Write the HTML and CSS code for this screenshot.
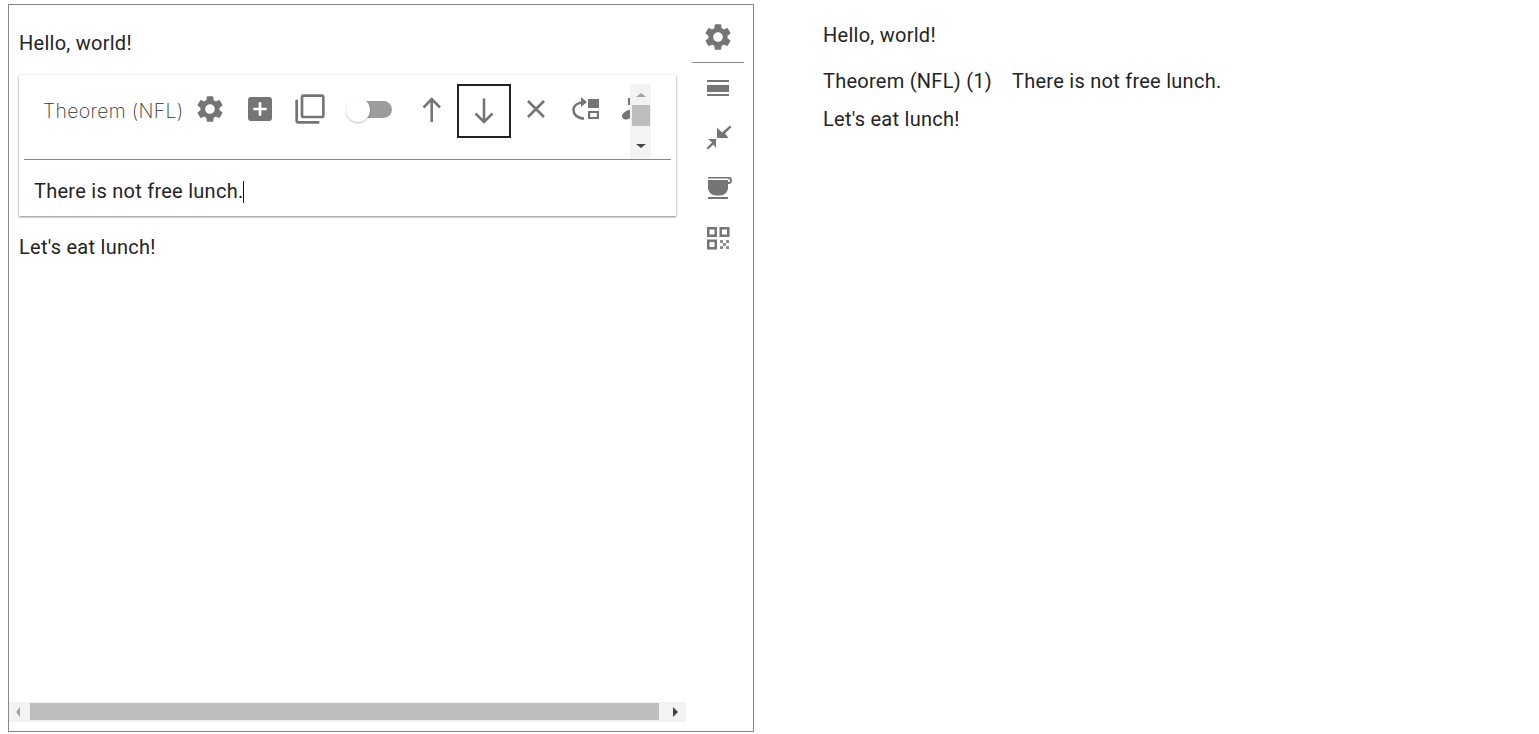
FILE: index.html
```html
<!DOCTYPE html>
<html lang="en">
<head>
<meta charset="utf-8">
<title>Editor</title>
<link rel="stylesheet" href="styles.css">
</head>
<body>
<main class="page">
  <section class="frame">
    <div class="editor">
      <div class="content">
        <p class="para hello">Hello, world!</p>
        <div class="card">
          <div class="toolbar">
            <div class="title">Theorem (NFL)</div>
            <div class="tools">
              <span class="tool"><svg class="icon" viewBox="0 0 24 24"><path d="M19.14 12.94c.04-.3.06-.61.06-.94 0-.32-.02-.64-.07-.94l2.03-1.58c.18-.14.23-.41.12-.61l-1.92-3.32c-.12-.22-.37-.29-.59-.22l-2.39.96c-.5-.38-1.03-.7-1.62-.94l-.36-2.54c-.04-.24-.24-.41-.48-.41h-3.84c-.24 0-.43.17-.47.41l-.36 2.54c-.59.24-1.13.57-1.62.94l-2.39-.96c-.22-.08-.47 0-.59.22L2.74 8.87c-.12.21-.08.47.12.61l2.03 1.58c-.05.3-.09.63-.09.94s.02.64.07.94l-2.03 1.58c-.18.14-.23.41-.12.61l1.92 3.32c.12.22.37.29.59.22l2.39-.96c.5.38 1.03.7 1.62.94l.36 2.54c.05.24.24.41.48.41h3.84c.24 0 .44-.17.47-.41l.36-2.54c.59-.24 1.13-.56 1.62-.94l2.39.96c.22.08.47 0 .59-.22l1.92-3.32c.12-.22.07-.47-.12-.61l-2.01-1.58zM12 15.6c-1.98 0-3.6-1.62-3.6-3.6s1.62-3.6 3.6-3.6 3.6 1.62 3.6 3.6-1.62 3.6-3.6 3.6z"/></svg></span>
              <span class="tool"><svg class="icon" viewBox="0 0 24 24"><path d="M19 3H5c-1.11 0-2 .9-2 2v14c0 1.1.89 2 2 2h14c1.1 0 2-.9 2-2V5c0-1.1-.9-2-2-2zm-2 10h-4v4h-2v-4H7v-2h4V7h2v4h4v2z"/></svg></span>
              <span class="tool"><svg class="icon" viewBox="0 0 24 24"><path d="M3 5H1v16c0 1.1.9 2 2 2h16v-2H3V5zm18-4H7c-1.1 0-2 .9-2 2v14c0 1.1.9 2 2 2h14c1.1 0 2-.9 2-2V3c0-1.1-.9-2-2-2zm0 16H7V3h14v14z"/></svg></span>
              <span class="tool tool-toggle"><span class="switch"><span class="knob"></span></span></span>
              <span class="tool tool-wide"><svg class="icon" viewBox="0 0 32 32"><path class="line" d="M16.7 29V5M8.500 14.500 16.700 6 25 14.500"/></svg></span>
              <span class="tool tool-focus"><svg class="icon" viewBox="0 0 32 32"><path class="line" d="M16 3.500V27.500M7.500 18.500 16 27 24.500 18.500"/></svg></span>
              <span class="tool"><svg class="icon" viewBox="0 0 32 32"><path class="line" d="M8 8 24 24M24 8 8 24"/></svg></span>
              <span class="tool"><svg class="icon" viewBox="0 0 32 32"><path class="line" d="M14 25.500C7 25.500 3.500 21 3.500 17C3.500 13 7 10 12 9.500"/><path d="M11 4 17 9 11 14z"/><rect x="18" y="6" width="11" height="9"/><path d="M18 18h11v8H18zm2.200 2v4h6.600v-4z"/></svg></span>
              <span class="tool"><svg class="icon" viewBox="0 0 32 32"><path d="M8 5h2v7H8zM2 22.500c0-1.500 4-5 7-5.500l3-.5v8l-5 2c-3 .5-5-1-5-4z"/></svg></span>
            </div>
            <div class="vscroll">
              <span class="arrow arrow-up"></span>
              <span class="vthumb"></span>
              <span class="arrow arrow-down"></span>
            </div>
          </div>
          <div class="body"><span class="body-text">There is not free lunch.</span><span class="caret"></span></div>
        </div>
        <p class="para after">Let's eat lunch!</p>
      </div>
      <div class="hscroll">
        <span class="arrow arrow-left"></span>
        <span class="hthumb"></span>
        <span class="arrow arrow-right"></span>
      </div>
    </div>
    <aside class="sidebar">
      <span class="side-item side-first"><svg class="icon" viewBox="0 0 24 24"><path d="M19.14 12.94c.04-.3.06-.61.06-.94 0-.32-.02-.64-.07-.94l2.03-1.58c.18-.14.23-.41.12-.61l-1.92-3.32c-.12-.22-.37-.29-.59-.22l-2.39.96c-.5-.38-1.03-.7-1.62-.94l-.36-2.54c-.04-.24-.24-.41-.48-.41h-3.84c-.24 0-.43.17-.47.41l-.36 2.54c-.59.24-1.13.57-1.62.94l-2.39-.96c-.22-.08-.47 0-.59.22L2.74 8.87c-.12.21-.08.47.12.61l2.03 1.58c-.05.3-.09.63-.09.94s.02.64.07.94l-2.03 1.58c-.18.14-.23.41-.12.61l1.92 3.32c.12.22.37.29.59.22l2.39-.96c.5.38 1.03.7 1.62.94l.36 2.54c.05.24.24.41.48.41h3.84c.24 0 .44-.17.47-.41l.36-2.54c.59-.24 1.13-.56 1.62-.94l2.39.96c.22.08.47 0 .59-.22l1.92-3.32c.12-.22.07-.47-.12-.61l-2.01-1.58zM12 15.600c-1.98 0-3.6-1.62-3.6-3.6s1.62-3.6 3.6-3.6 3.6 1.62 3.6 3.6-1.62 3.6-3.6 3.6z"/></svg></span>
      <span class="side-item"><svg class="icon" viewBox="0 0 32 32"><path d="M5 8h22v2H5zM5 13h22v7H5zM5 22h22v2H5z"/></svg></span>
      <span class="side-item"><svg class="icon" viewBox="0 0 32 32"><path d="M28 3.500 29.500 5 23 11.500 26.500 16H15V5.500L20 10.500zM6 27.500 4.500 26 10 20.500 6 17H14V26L11.500 22.500z"/></svg></span>
      <span class="side-item"><svg class="icon" viewBox="0 0 32 32"><path d="M6 5H26V6.500H6ZM6 8H26V16C26 20 22 23.500 18 23.500H14C10 23.500 6 20 6 16ZM6 25H26V27H6ZM26 5H27C29 5 30 6.500 30 8.500C30 10.800 28.800 12 27 12H26V10H27C27.700 10 28 9.300 28 8.500C28 7.800 27.700 7 27 7H26Z"/></svg></span>
      <span class="side-item"><svg class="icon" viewBox="0 0 32 32"><path d="M5 5h10v10H5zm2.500 2.500v5h5v-5zM17.500 5h10v10h-10zM20 7.500v5h5v-5zM5 17.500h10v10H5zM7.500 20v5h5v-5z"/><path class="qr-dots" d="M18 18h3v3h-3zM24 18h3v3h-3zM21 21h3v3h-3zM18 24h3v3h-3zM24 24h3v3h-3z"/></svg></span>
    </aside>
  </section>
  <section class="preview">
    <p class="prev-line">Hello, world!</p>
    <p class="prev-line prev-theorem"><span class="prev-head">Theorem (NFL) (1)</span><span>There is not free lunch.</span></p>
    <p class="prev-line prev-last">Let's eat lunch!</p>
  </section>
</main>
</body>
</html>
```
FILE: styles.css
```css
* { box-sizing: border-box; }
html, body { margin: 0; padding: 0; background: #fff; }
body {
  font-family: Roboto, "Liberation Sans", sans-serif;
  font-size: 20px;
  letter-spacing: .26px;
  color: #242424;
  overflow: hidden;
}
p { margin: 0; }
.page { display: flex; align-items: flex-start; padding: 4px 0 0 8px; }
.frame {
  display: flex;
  width: 746px;
  height: 728px;
  border: 1px solid #888;
  flex: none;
}
.editor { width: 677px; flex: none; display: flex; flex-direction: column; }
.content { flex: 1; padding: 25px 0 0 10px; }
.para { line-height: 26px; }
.hello { margin-bottom: 19px; }
.after { margin-top: 18px; }
.card {
  width: 657px;
  height: 141px;
  box-shadow: 0 1px 2px rgba(0,0,0,.45), 0 0 4px rgba(0,0,0,.06);
  background: #fff;
  padding: 0 5px;
}
.toolbar {
  height: 85px;
  padding-top: 9px;
  border-bottom: 1px solid #888;
  display: flex;
  align-items: flex-start;
}
.title {
  width: 161px;
  flex: none;
  padding: 14px 0 0 19px;
  font-family: Inter, sans-serif;
  font-weight: 200;
  font-size: 19.500px;
  line-height: 26px;
  letter-spacing: .3px;
  color: #333;
  white-space: nowrap;
}
.tools { width: 445px; flex: none; height: 75px; display: flex; overflow: hidden; }
.tool { width: 50px; height: 50px; flex: none; display: flex; align-items: center; justify-content: center; }
.icon { width: 32px; height: 32px; fill: #757575; display: block; }
.line { fill: none; stroke: #757575; stroke-width: 2.6; }
.tool-toggle { width: 70px; justify-content: flex-start; padding: 0 0 0 23px; }
.tool-wide { width: 52px; }
.tool-focus { width: 54px; height: 54px; border: 2px solid #222; }
.switch { position: relative; display: block; width: 34px; height: 17px; border-radius: 0 9px 9px 0; background: #9c9c9c; }
.knob { position: absolute; left: -12px; top: -3px; width: 24px; height: 24px; border-radius: 50%; background: #fff; box-shadow: 0 1px 2px rgba(0,0,0,.25); }
.vscroll {
  width: 21px;
  height: 75px;
  flex: none;
  background: #f3f3f3;
  display: flex;
  flex-direction: column;
  align-items: center;
  padding-top: 9px;
}
.arrow { display: block; width: 0; height: 0; border-style: solid; border-color: transparent; flex: none; }
.arrow-up { border-width: 0 5px 4px; border-bottom-color: #a3a3a3; }
.vthumb { width: 18px; height: 21px; background: #bdbdbd; margin: 8px 0 18px; flex: none; }
.arrow-down { border-width: 4px 5px 0; border-top-color: #444; }
.body { height: 56px; padding: 19px 0 0 10px; line-height: 24px; display: flex; align-items: flex-start; }
.caret { width: 1px; height: 22px; background: #111; margin-top: 2px; }
.hscroll {
  height: 20px;
  margin-bottom: 9px;
  background: #f3f3f3;
  display: flex;
  align-items: center;
  flex: none;
}
.arrow-left { border-width: 5px 4px 5px 0; border-right-color: #a3a3a3; margin-left: 7px; }
.hthumb { width: 629px; height: 17px; background: #bdbdbd; margin: 0 14px 2px 10px; }
.arrow-right { border-width: 5px 0 5px 5px; border-left-color: #444; }
.sidebar {
  width: 52px;
  margin-left: 6px;
  flex: none;
  padding-top: 7px;
  display: flex;
  flex-direction: column;
}
.side-item { height: 50px; display: flex; align-items: center; justify-content: center; flex: none; }
.side-first { height: 51px; padding-bottom: 1px; border-bottom: 1px solid #888; }
.qr-dots { opacity: .8; }
.preview { margin-left: 69px; padding-top: 18px; width: 500px; }
.prev-line { line-height: 26px; }
.prev-theorem { margin-top: 20px; display: flex; }
.prev-head { margin-right: 20px; }
.prev-last { margin-top: 12px; }
```
